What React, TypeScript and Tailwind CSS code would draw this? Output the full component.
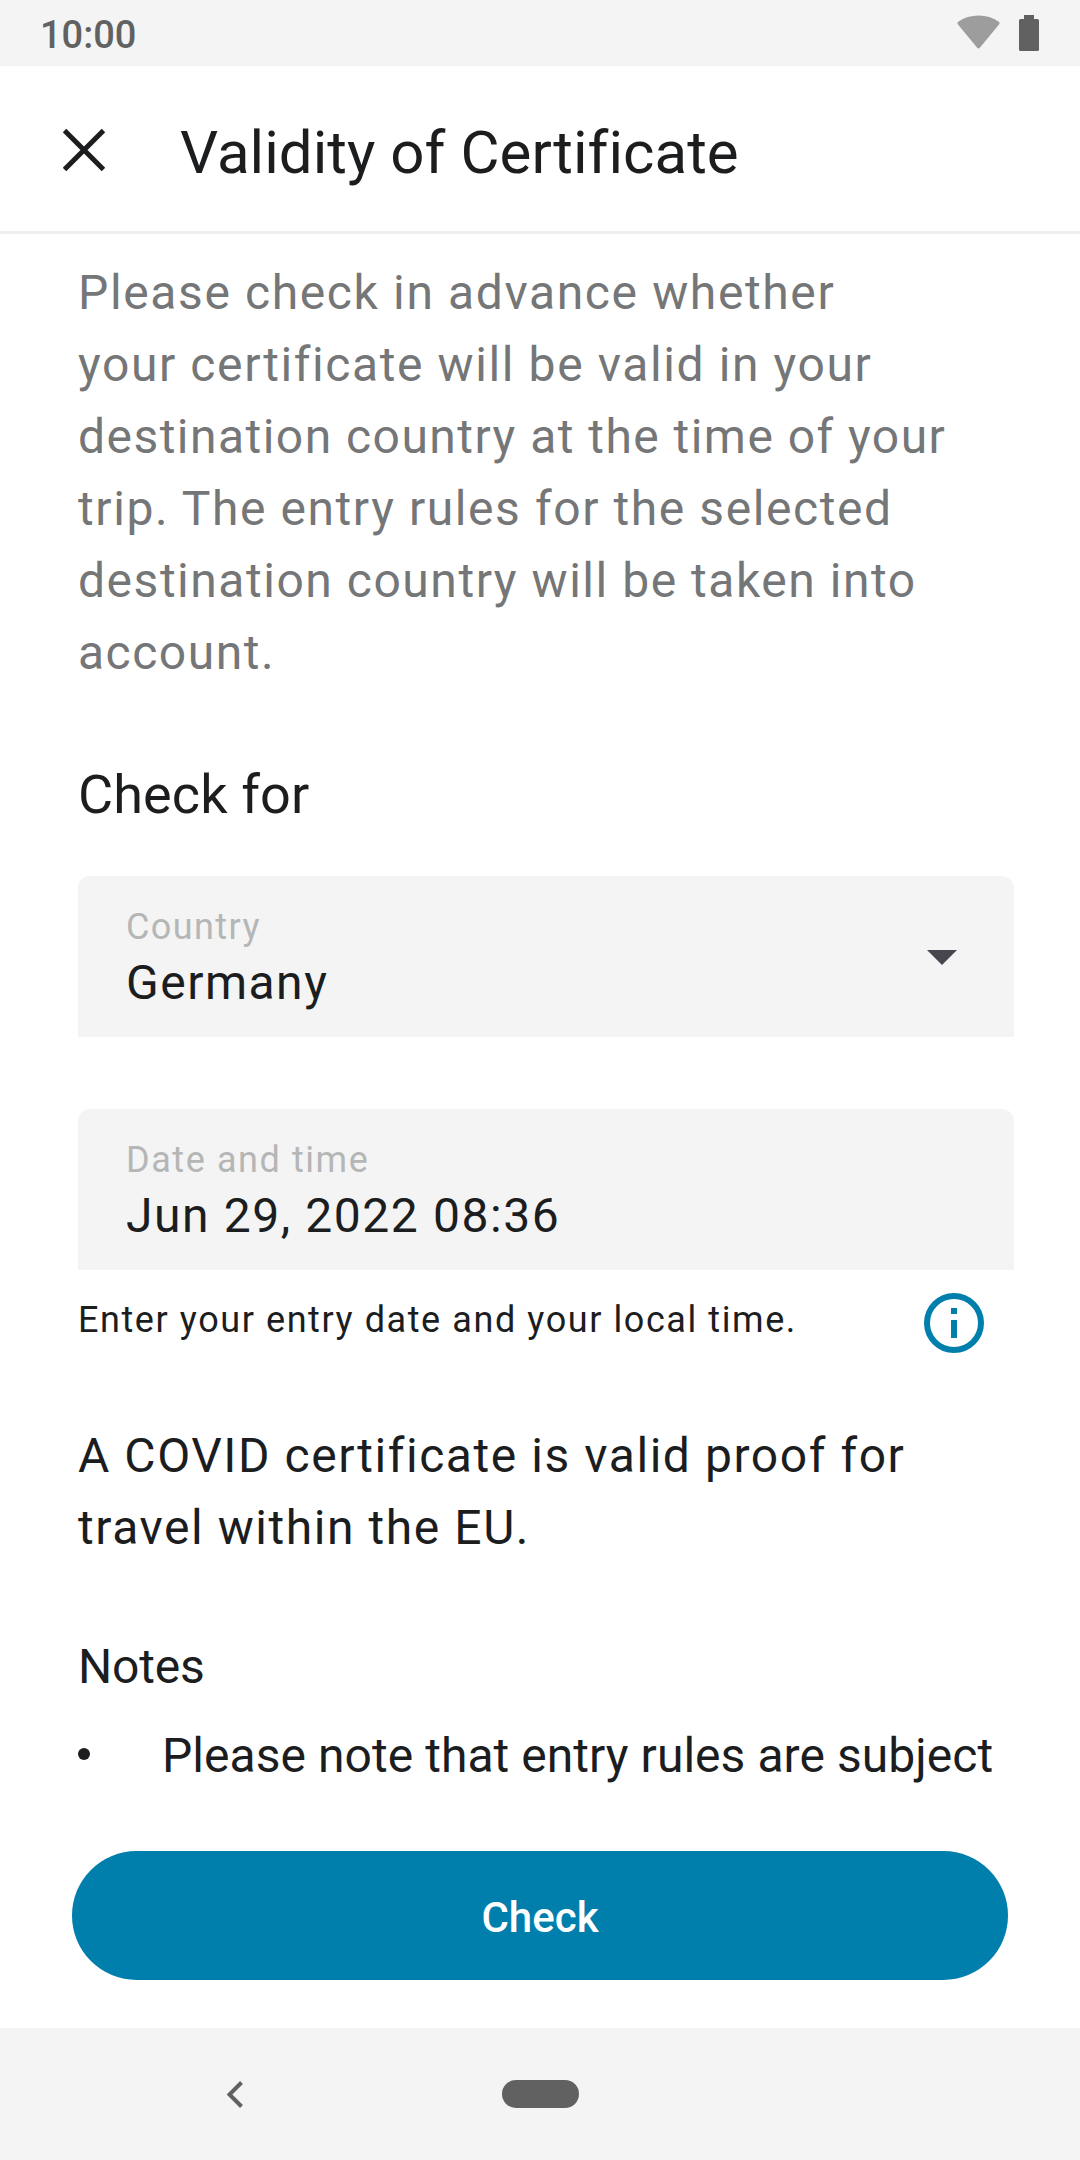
export default function App() {
  return (
    <div className="flex h-[2160px] w-[1080px] flex-col overflow-hidden bg-white font-['Roboto',sans-serif] text-[#1c1d1f]">
      <header className="flex h-[66px] shrink-0 items-center bg-[#f4f4f4] pl-[40px] pr-[41px] text-[#616161]">
        <span className="flex-1 pt-[4px] text-[38px] leading-[62px] font-medium">10:00</span>
        <svg className="mr-[19px] mb-[3px] h-[34px] w-[43px]" viewBox="0 0 43 34"><path d="M1.2 6.7Q10 .5 21.5.5T41.8 6.7Q43.2 7.8 42 9.4L22.8 32.8Q21.5 34.2 20.2 32.8L1 9.4Q-.2 7.8 1.2 6.7Z" fill="#9d9d9d" /></svg>
        <svg className="h-[36px] w-[20px]" viewBox="0 0 20 36"><path d="M5 0h10v4h3.5Q20 4 20 5.500v29Q20 36 18.500 36h-17Q0 36 0 34.500v-29Q0 4 1.500 4H5z" fill="#616161" /></svg>
      </header>
      <div className="flex h-[168px] shrink-0 items-center border-b-[3px] border-[#efefef] pl-[63px]">
        <svg className="mt-[3px] h-[42px] w-[42px]" viewBox="0 0 42 42" stroke="#1c1d1f" strokeWidth="5"><path d="M1.500 1.500l39 39M40.500 1.500L1.500 40.500" /></svg>
        <h1 className="ml-[75px] pt-[8px] text-[60px] leading-[70px] tracking-[0.04px]">Validity of Certificate</h1>
      </div>
      <main className="h-[1560px] shrink-0 overflow-hidden px-[78px] pt-[23px]">
        <p className="h-[432px] text-[48px] leading-[72px] tracking-[1.5px] whitespace-nowrap text-[#757677]">
          <span className="tracking-[1.62px]">Please check in advance whether</span><br />
          <span className="tracking-[1.6px]">your certificate will be valid in your</span><br />
          <span className="tracking-[1.46px]">destination country at the time of your</span><br />
          <span className="tracking-[1.58px]">trip. The entry rules for the selected</span><br />
          <span className="tracking-[1.53px]">destination country will be taken into</span><br />
          account.
        </p>
        <h2 className="mt-[70px] text-[54px] leading-[72px] tracking-[0.1px]">Check for</h2>
        <div className="mt-[45px] flex h-[161px] w-[936px] items-center justify-between rounded-t-[12px] bg-[#f4f4f4] pl-[48px] pr-[57px]">
          <div className="pt-[5px]"><div className="text-[36px] leading-[48px] tracking-[1.4px] text-[#b5b6b6]">Country</div><div className="text-[48px] leading-[64px] tracking-[1.5px]">Germany</div></div>
          <svg className="mt-px h-[15px] w-[30px]" viewBox="0 0 30 15"><path d="M0 0h30L15 15z" fill="#47464f" /></svg>
        </div>
        <div className="mt-[72px] flex h-[161px] w-[936px] items-center rounded-t-[12px] bg-[#f4f4f4] pl-[48px]">
          <div className="pt-[5px]"><div className="text-[36px] leading-[48px] tracking-[1.58px] text-[#b5b6b6]">Date and time</div><div className="text-[48px] leading-[64px] tracking-[1.57px]">Jun 29, 2022 08:36</div></div>
        </div>
        <div className="mt-[23px] flex h-[62px] w-[906px] justify-between">
          <p className="text-[36px] leading-[54px] tracking-[1.58px]">Enter your entry date and your local time.</p>
          <svg className="h-[60px] w-[60px]" viewBox="0 0 60 60"><circle cx="30" cy="30" r="27" fill="none" stroke="#007fad" strokeWidth="6" /><path d="M27 15h6v6h-6zM27 27h6v18h-6z" fill="#007fad" /></svg>
        </div>
        <p className="mt-[65px] text-[48px] leading-[72px] tracking-[1.56px] whitespace-nowrap">A COVID certificate is valid proof for<br />travel within the EU.</p>
        <h3 className="mt-[67px] text-[48px] leading-[72px] tracking-[-0.2px]">Notes</h3>
        <div className="mt-[18px] flex items-center"><span className="mb-[4px] size-[12px] rounded-full bg-[#1c1d1f]" /><span className="ml-[72px] text-[48px] leading-[70px] tracking-[0.05px] whitespace-nowrap">Please note that entry rules are subject</span></div>
      </main>
      <div className="h-[234px] shrink-0 pt-[57px] pl-[72px]">
        <button className="block h-[129px] w-[936px] rounded-full bg-[#007fad] pt-[4px] text-[42px] font-medium text-white">Check</button>
      </div>
      <nav className="flex h-[132px] shrink-0 items-center bg-[#f4f4f4] pl-[226px]">
        <svg className="h-[27px] w-[18px]" viewBox="0 0 18 27" fill="none" stroke="#616161" strokeWidth="4"><path d="M15.500 1.500L3.500 13.500L15.500 25.500" /></svg>
        <span className="ml-[258px] h-[28px] w-[77px] rounded-full bg-[#616161]" />
      </nav>
    </div>
  );
}
